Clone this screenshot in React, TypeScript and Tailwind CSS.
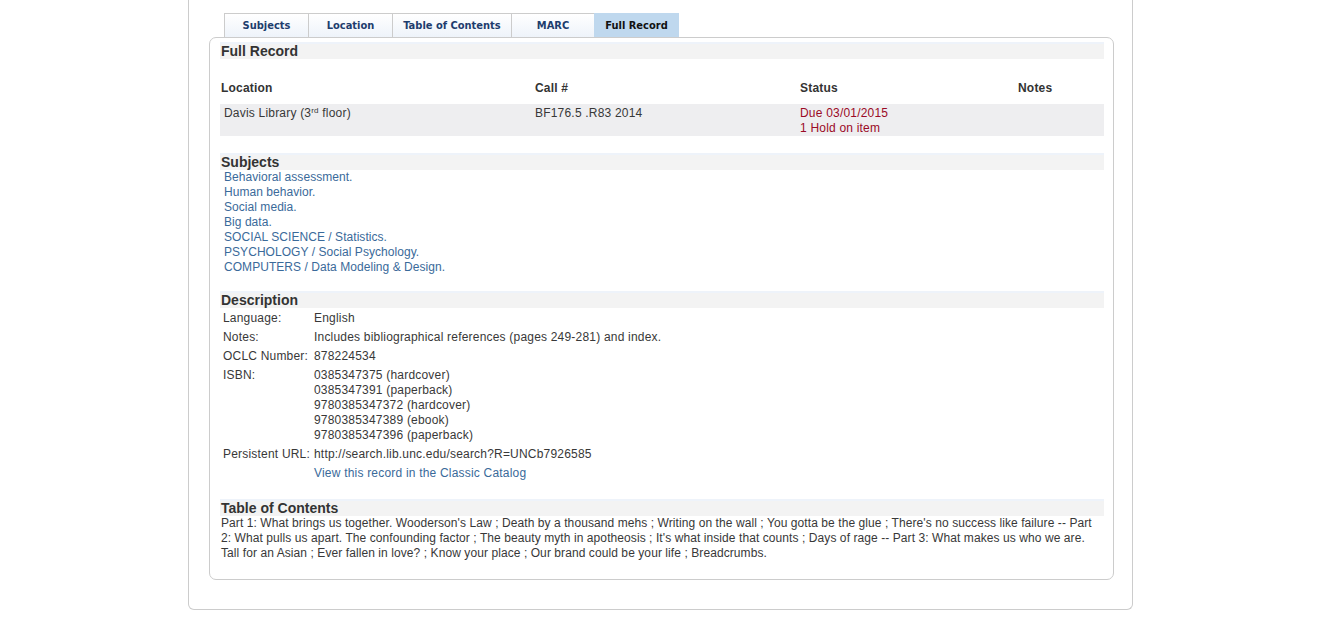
const tabs = [
  { label: "Subjects", w: "w-[84px]" },
  { label: "Location", w: "w-[84px]" },
  { label: "Table of Contents", w: "w-[119px]" },
  { label: "MARC", w: "w-[83px]" },
  { label: "Full Record", w: "w-[85px]", active: true },
];

const subjects = [
  "Behavioral assessment.",
  "Human behavior.",
  "Social media.",
  "Big data.",
  "SOCIAL SCIENCE / Statistics.",
  "PSYCHOLOGY / Social Psychology.",
  "COMPUTERS / Data Modeling & Design.",
];

const isbns = [
  "0385347375 (hardcover)",
  "0385347391 (paperback)",
  "9780385347372 (hardcover)",
  "9780385347389 (ebook)",
  "9780385347396 (paperback)",
];

function SectionHeader({ title }: { title: string }) {
  return (
    <div className="h-[17px] border-t-2 border-[#eef3fa] bg-[#f3f3f3] pl-px text-[14px] font-bold leading-[14px] tracking-normal text-[#333]">
      {title}
    </div>
  );
}

function DescRow({ label, children }: { label: string; children: React.ReactNode }) {
  return (
    <div className="flex">
      <div className="w-[91px] shrink-0">{label}</div>
      <div>{children}</div>
    </div>
  );
}

export default function App() {
  return (
    <div className="min-h-screen bg-white font-['Liberation_Sans',Arial,sans-serif] text-[12px] leading-[15px] tracking-[0.2px] text-[#383838]">
      <div className="ml-[188px] w-[945px] rounded-b-[6px] border border-t-0 border-[#cccccc] pb-[29px] pl-[20px] pr-[18px] pt-[13px]">
        {/* Tabs */}
        <div className="ml-[15px] flex h-[24px] font-['DejaVu_Sans_Condensed','DejaVu_Sans',sans-serif] text-[11px] font-bold tracking-normal">
          {tabs.map((t) => (
            <div
              key={t.label}
              className={
                t.active
                  ? `${t.w} flex items-center justify-center bg-[#bfd8ee] text-[#111]`
                  : `${t.w} flex items-center justify-center border-l border-t border-[#cccccc] bg-gradient-to-b from-white to-[#eef3fa] text-[#1e3d6d]`
              }
            >
              {t.label}
            </div>
          ))}
        </div>

        {/* Record panel */}
        <div className="rounded-[7px] border border-[#cccccc] pb-[18px] pl-[10px] pr-[9px] pt-[4px]">
          <SectionHeader title="Full Record" />

          <div className="grid grid-cols-[315px_265px_218px_1fr] pt-[22px]">
            <div className="pb-[8px] pl-px font-bold text-[#333]">Location</div>
            <div className="pb-[8px] font-bold text-[#333]">Call #</div>
            <div className="pb-[8px] font-bold text-[#333]">Status</div>
            <div className="pb-[8px] font-bold text-[#333]">Notes</div>
            <div className="bg-[#eeeef0] pb-[2px] pl-[4px] pt-[2px]">
              Davis Library (3<sup className="text-[8px]">rd</sup> floor)
            </div>
            <div className="bg-[#eeeef0] pt-[2px]">BF176.5 .R83 2014</div>
            <div className="bg-[#eeeef0] pt-[2px] text-[#9b0a26]">
              <div>Due 03/01/2015</div>
              <div>1 Hold on item</div>
            </div>
            <div className="bg-[#eeeef0]" />
          </div>

          <div className="mt-[17px]">
            <SectionHeader title="Subjects" />
            <div className="pl-[4px] tracking-[0.05px]">
              {subjects.map((s) => (
                <div key={s} className="text-[#3a6a9a]">
                  {s}
                </div>
              ))}
            </div>
          </div>

          <div className="mt-[16px]">
            <SectionHeader title="Description" />
            <div className="flex flex-col gap-[4px] pl-[3px] pt-[3px]">
              <DescRow label="Language:">English</DescRow>
              <DescRow label="Notes:">
                Includes bibliographical references (pages 249-281) and index.
              </DescRow>
              <DescRow label="OCLC Number:">878224534</DescRow>
              <DescRow label="ISBN:">
                {isbns.map((i) => (
                  <div key={i}>{i}</div>
                ))}
              </DescRow>
              <DescRow label="Persistent URL:">
                http://search.lib.unc.edu/search?R=UNCb7926585
              </DescRow>
              <DescRow label="">
                <span className="text-[#3a6a9a]">View this record in the Classic Catalog</span>
              </DescRow>
            </div>
          </div>

          <div className="mt-[18px]">
            <SectionHeader title="Table of Contents" />
            <div className="pl-px tracking-[0.08px]">
              Part 1: What brings us together. Wooderson's Law ; Death by a thousand mehs ;
              Writing on the wall ; You gotta be the glue ; There's no success like failure --
              Part 2: What pulls us apart. The confounding factor ; The beauty myth in
              apotheosis ; It's what inside that counts ; Days of rage -- Part 3: What makes us
              who we are. Tall for an Asian ; Ever fallen in love? ; Know your place ; Our brand
              could be your life ; Breadcrumbs.
            </div>
          </div>
        </div>
      </div>
    </div>
  );
}
